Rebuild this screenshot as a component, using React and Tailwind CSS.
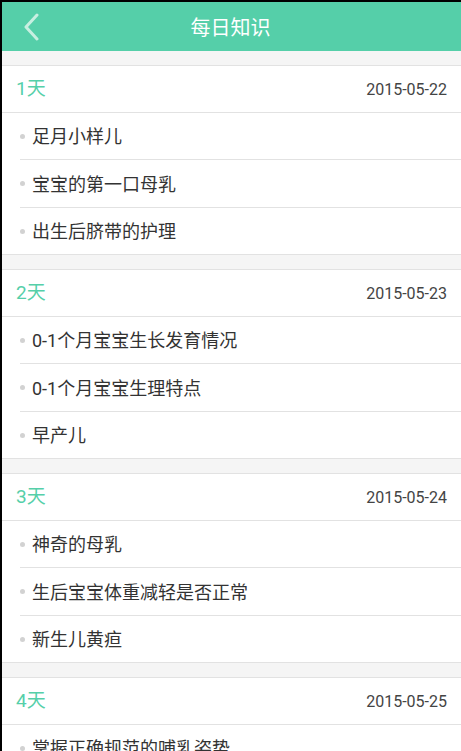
import React from 'react';

const days = [
  { day: '1天', date: '2015-05-22', items: ['足月小样儿', '宝宝的第一口母乳', '出生后脐带的护理'] },
  { day: '2天', date: '2015-05-23', items: ['0-1个月宝宝生长发育情况', '0-1个月宝宝生理特点', '早产儿'] },
  { day: '3天', date: '2015-05-24', items: ['神奇的母乳', '生后宝宝体重减轻是否正常', '新生儿黄疸'] },
  { day: '4天', date: '2015-05-25', items: ['掌握正确规范的哺乳姿势', '母乳喂养的好处', '宝宝吐奶怎么办'] },
];

const font = { fontFamily: 'Roboto, "Noto Sans CJK SC", sans-serif' };

// row heights include the bottom border (border-box)
const rowClass = ['h-[47px] border-b', 'h-[48px] border-b', 'h-[46px]'];

const DaySection = ({ day, date, items }) => {
  return (
    <div className="mt-[14px] bg-white border-y border-[#e2e2e2]">
      <div className="h-[47px] flex items-center justify-between pl-[14px] pr-[14px] border-b border-[#e2e2e2]">
        <span className="text-[19px] text-[#55cfa9] pt-[1px]">{day}</span>
        <span className="text-[16px] text-[#444] pt-[1px]">{date}</span>
      </div>
      {items.map((item, i) => (
        <div key={item} className="pl-[18px]">
          <div className={'flex items-center border-[#e2e2e2] ' + rowClass[i]}>
            <span className="w-[5px] h-[5px] rounded-full bg-[#d2d2d2] mr-[7px]" />
            <span className="text-[18px] text-[#333] pt-[1px]">{item}</span>
          </div>
        </div>
      ))}
    </div>
  );
};

const App = () => {
  return (
    <div className="h-[751px] overflow-hidden bg-[#f5f5f5] border-l-2 border-black" style={font}>
      <div className="h-[51px] bg-[#55cfa9] border-t-2 border-black flex items-center relative">
        <svg className="absolute left-[20px] top-[11px]" width="20" height="28" viewBox="0 0 20 28">
          <path d="M15 2 L4 14 L15 26" fill="none" stroke="#c8efe1" strokeWidth="3" strokeLinecap="round" strokeLinejoin="round" />
        </svg>
        <div className="flex-1 text-center text-white text-[20px] pr-[2px] pt-[2px]">每日知识</div>
      </div>
      {days.map((d) => (
        <DaySection key={d.day} {...d} />
      ))}
    </div>
  );
};

export default App;
